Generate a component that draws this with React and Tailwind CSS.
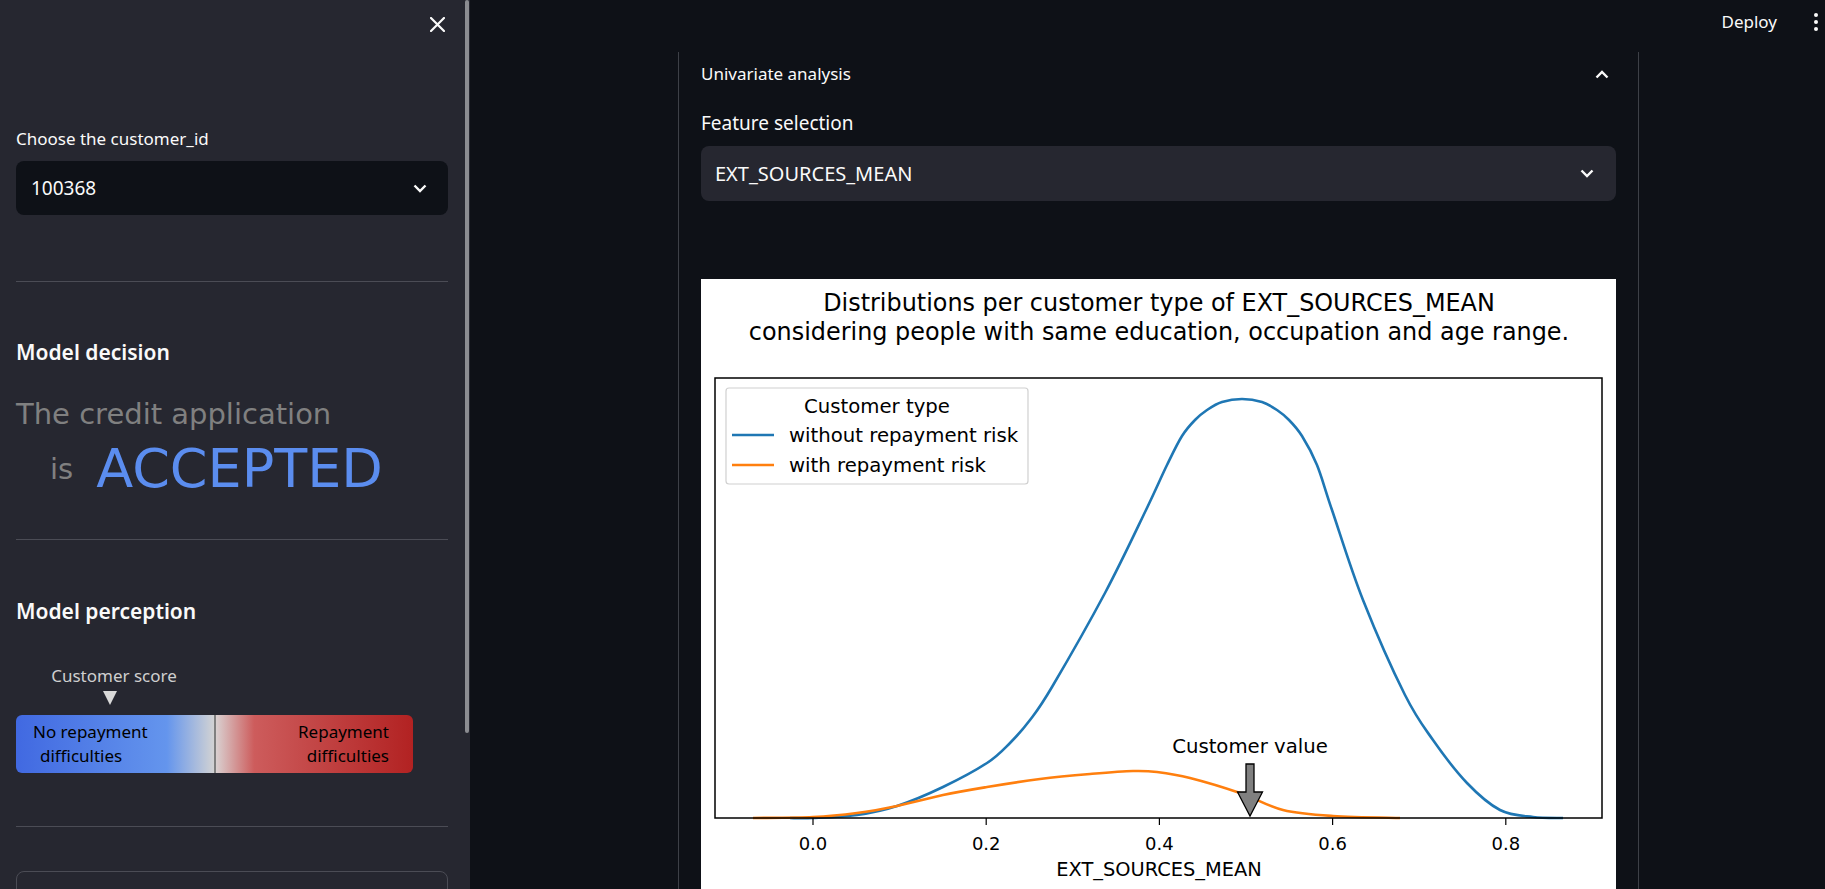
import React from 'react';

// smooth curve through points (catmull-rom -> cubic bezier)
function smoothPath(pts) {
  let d = `M${pts[0][0]},${pts[0][1]}`;
  for (let i = 0; i < pts.length - 1; i++) {
    const p0 = pts[i - 1] || pts[i];
    const p1 = pts[i];
    const p2 = pts[i + 1];
    const p3 = pts[i + 2] || p2;
    const c1x = p1[0] + (p2[0] - p0[0]) / 6;
    const c1y = p1[1] + (p2[1] - p0[1]) / 6;
    const c2x = p2[0] - (p3[0] - p1[0]) / 6;
    const c2y = p2[1] - (p3[1] - p1[1]) / 6;
    d += ` C${c1x.toFixed(1)},${c1y.toFixed(1)} ${c2x.toFixed(1)},${c2y.toFixed(1)} ${p2[0]},${p2[1]}`;
  }
  return d;
}

const blue = [
  [89, 539], [112, 539], [156, 536], [196, 527], [242, 508], [286, 484], [309, 464],
  [329, 441], [351, 408], [404, 314], [445, 231], [466, 186], [481, 157], [494, 141],
  [506, 131], [521, 123], [541, 120], [561, 123], [576, 131], [588, 141], [601, 157],
  [616, 186], [631, 231], [662, 321], [704, 416], [732, 461], [766, 504],
  [799, 531], [832, 538], [862, 539],
];

const orange = [
  [52, 539], [112, 538], [156, 534], [196, 527], [242, 516], [286, 508], [339, 500],
  [389, 495], [432, 492], [456, 493], [489, 499], [539, 514], [582, 531], [632, 537], [699, 539],
];

const ticks = [0, 0.2, 0.4, 0.6, 0.8];
const tx = (v) => 112 + 866 * v;

function Chevron({ up = false, className = '' }) {
  return (
    <svg width="14" height="9" viewBox="0 0 14 9" className={className}>
      <path
        d={up ? 'M1.5 7.5 L7 2 L12.5 7.5' : 'M1.5 1.5 L7 7 L12.5 1.5'}
        fill="none"
        stroke="#fafafa"
        strokeWidth="2.4"
      />
    </svg>
  );
}

function DistributionChart() {
  return (
    <svg width="915" height="620" viewBox="0 0 915 620" className="block bg-white" style={{ fontFamily: '"DejaVu Sans", sans-serif' }}>
      <text x="458" y="32" fontSize="23.9" textAnchor="middle" fill="#000">Distributions per customer type of EXT_SOURCES_MEAN</text>
      <text x="458" y="61" fontSize="23.9" textAnchor="middle" fill="#000">considering people with same education, occupation and age range.</text>

      <path d={smoothPath(blue)} fill="none" stroke="#1f77b4" strokeWidth="2.6" />
      <path d={smoothPath(orange)} fill="none" stroke="#ff7f0e" strokeWidth="2.6" />

      <rect x="14" y="99" width="887" height="440" fill="none" stroke="#000" strokeWidth="1.5" />

      {ticks.map((v) => (
        <g key={v}>
          <line x1={tx(v)} y1="539" x2={tx(v)} y2="546" stroke="#000" strokeWidth="1.2" />
          <text x={tx(v)} y="571" fontSize="18" textAnchor="middle" fill="#000">{v.toFixed(1)}</text>
        </g>
      ))}
      <text x="458" y="597" fontSize="19.4" textAnchor="middle" fill="#000">EXT_SOURCES_MEAN</text>

      {/* legend */}
      <rect x="25" y="109" width="302" height="96" rx="3" fill="#fff" fillOpacity="0.85" stroke="#d0d0d0" strokeWidth="1.2" />
      <text x="176" y="134" fontSize="19.7" textAnchor="middle" fill="#000">Customer type</text>
      <line x1="31" y1="156" x2="73" y2="156" stroke="#1f77b4" strokeWidth="2.6" />
      <text x="88" y="163" fontSize="19.7" fill="#000">without repayment risk</text>
      <line x1="31" y1="186" x2="73" y2="186" stroke="#ff7f0e" strokeWidth="2.6" />
      <text x="88" y="193" fontSize="19.7" fill="#000">with repayment risk</text>

      {/* customer marker */}
      <text x="549" y="474" fontSize="19.7" textAnchor="middle" fill="#000">Customer value</text>
      <polygon
        points="545,485 553,485 553,513 561.5,513 549,537 536.5,513 545,513"
        fill="#808080"
        stroke="#000"
        strokeWidth="1.3"
      />
    </svg>
  );
}

export default function App() {
  return (
    <div className="flex h-screen w-full overflow-hidden bg-[#0e1117] font-['Noto_Sans',sans-serif] text-[#fafafa]">
      {/* SIDEBAR */}
      <aside className="flex w-[470px] shrink-0 bg-[#262730]">
        <div className="w-[465px] pl-4 pr-[17px] flex flex-col [&>*]:shrink-0">
          <div className="flex justify-end pt-[17px] pr-[3px]">
            <svg width="15" height="15" viewBox="0 0 15 15">
              <path d="M1 1 L14 14 M14 1 L1 14" stroke="#fafafa" strokeWidth="2.2" strokeLinecap="round" />
            </svg>
          </div>

          <label className="mt-[95px] text-[17px] leading-[24px]">Choose the customer_id</label>
          <div className="mt-[10px] h-[54px] rounded-lg bg-[#0e1117] flex items-center justify-between pl-[15px] pr-[21px]">
            <span className="text-[19px]">100368</span>
            <Chevron />
          </div>

          <div className="mt-[66px] h-px bg-[#4b4c55]" />

          <h4 className="mt-[56px] text-[21px] leading-[28px] font-semibold">Model decision</h4>
          <div className="font-['DejaVu_Sans',sans-serif] text-[#808080]">
            <p className="mt-[31px] text-[29px] leading-[35px]">The credit application</p>
            <div className="mt-[10px] flex items-center pl-[34px] gap-[23px]">
              <span className="text-[29px] leading-none">is</span>
              <span className="text-[54px] leading-none text-[#5b8def]">ACCEPTED</span>
            </div>
          </div>

          <div className="mt-[43px] h-px bg-[#4b4c55]" />

          <h4 className="mt-[57px] text-[21px] leading-[28px] font-semibold">Model perception</h4>
          <div className="mt-[39px] w-[196px] text-center text-[17px] leading-[24px] text-[#cfcfcf]">Customer score</div>
          <div className="mt-[3px] ml-[87px] w-0 h-0 border-l-[7px] border-r-[7px] border-t-[14px] border-l-transparent border-r-transparent border-t-[#d9d9d9]" />
          <div className="mt-[10px] grid grid-cols-[198px_2px_197px] h-[58px] w-[397px] rounded-md bg-[linear-gradient(to_right,#4169e1_0%,#6495ed_38%,#d3d3d3_50%,#d9cfcf_50.5%,#cd5c5c_60%,#b22222_100%)] text-[17px] leading-[24px] text-black">
            <div className="flex flex-col justify-center">
              <span className="pl-[17px]">No repayment</span>
              <span className="pl-[24px]">difficulties</span>
            </div>
            <div className="bg-[#808080]" />
            <div className="flex flex-col justify-center items-end pr-[24px]">
              <span>Repayment</span>
              <span>difficulties</span>
            </div>
          </div>

          <div className="mt-[53px] h-px bg-[#4b4c55]" />

          <div className="mt-[44px] h-[120px] rounded-lg border border-[#4b4c55]" />
        </div>
        <div className="w-[4px] h-[733px] rounded-full bg-[#8b8c91]" />
      </aside>

      {/* MAIN */}
      <main className="flex-1 flex flex-col">
        <header className="h-[52px] shrink-0 flex justify-end items-start pt-[10px] pr-[7px]">
          <span className="text-[17px] leading-[24px]">Deploy</span>
          <div className="ml-[37px] mt-[3px] flex flex-col gap-[3px]">
            <span className="block w-[4px] h-[4px] rounded-full bg-[#fafafa]" />
            <span className="block w-[4px] h-[4px] rounded-full bg-[#fafafa]" />
            <span className="block w-[4px] h-[4px] rounded-full bg-[#fafafa]" />
          </div>
        </header>

        <div className="pl-[208px]">
          <section className="w-[961px] border-x border-[#3d4047] flex flex-col">
            <div className="h-[44px] flex items-center justify-between pl-[22px] pr-[29px]">
              <span className="text-[17px]">Univariate analysis</span>
              <Chevron up />
            </div>
            <div className="px-[22px] flex flex-col">
              <label className="mt-[14px] text-[19px] leading-[26px]">Feature selection</label>
              <div className="mt-[10px] h-[55px] rounded-lg bg-[#262730] flex items-center justify-between pl-[14px] pr-[22px]">
                <span className="text-[20px]">EXT_SOURCES_MEAN</span>
                <Chevron />
              </div>
              <div className="mt-[78px]">
                <DistributionChart />
              </div>
            </div>
          </section>
        </div>
      </main>
    </div>
  );
}
